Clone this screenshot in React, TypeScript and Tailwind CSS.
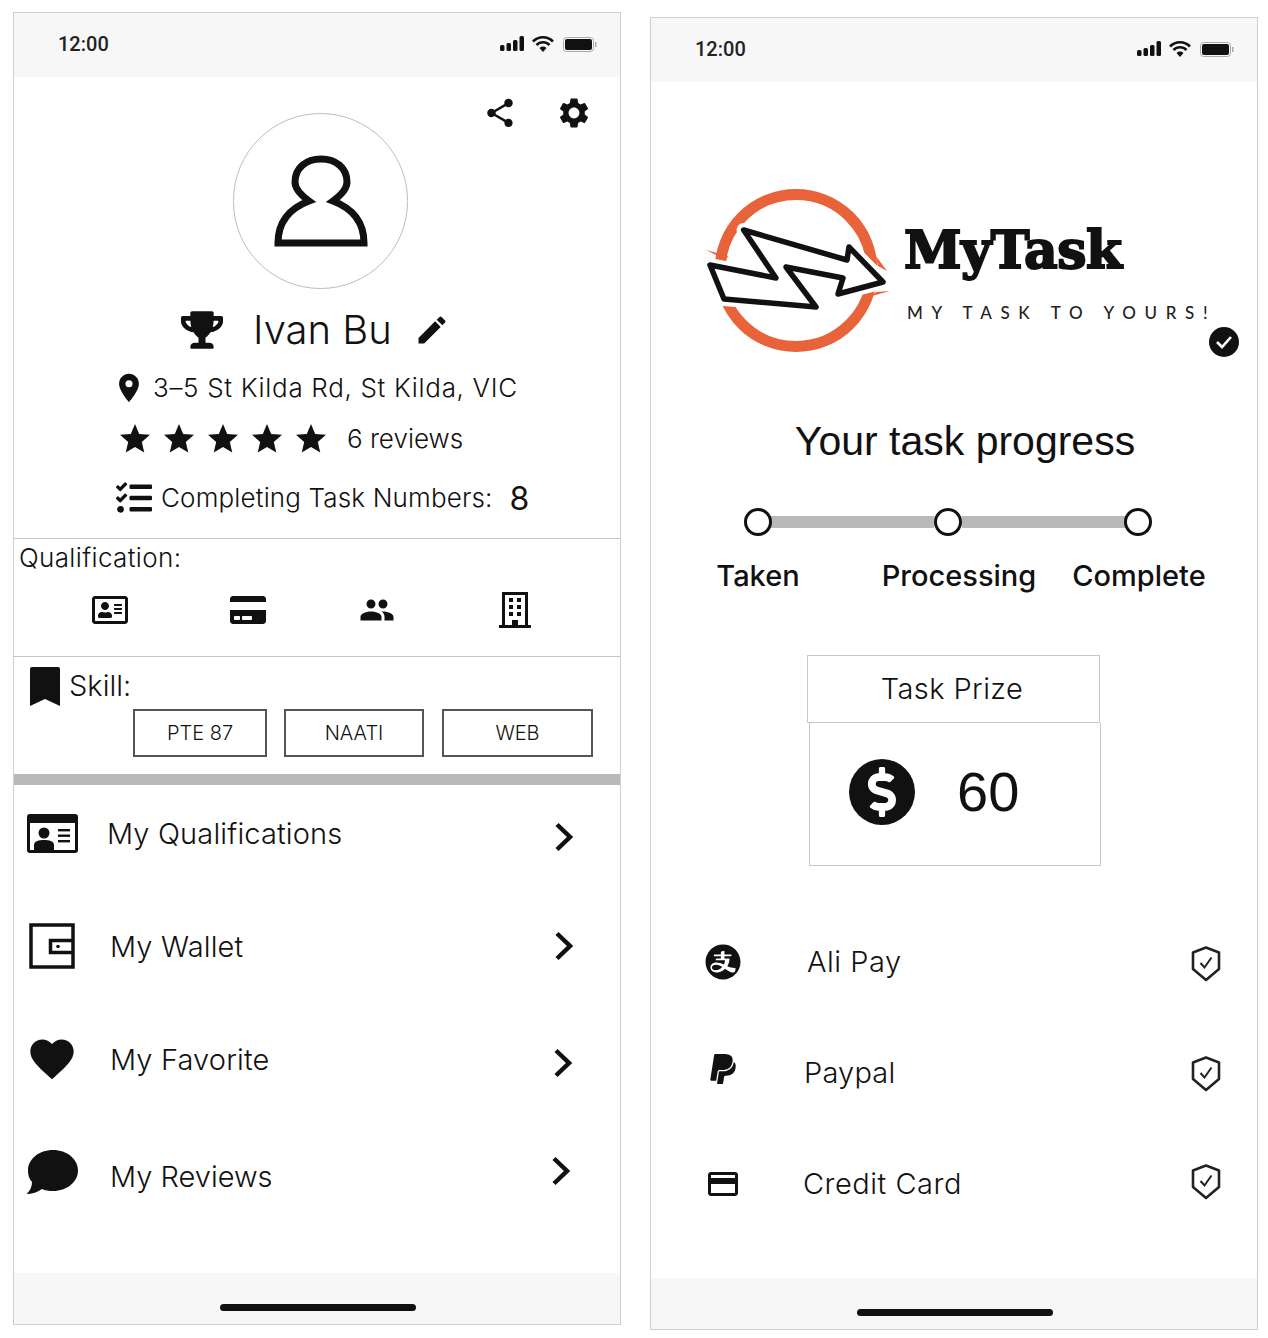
import { AiFillAlipayCircle } from "react-icons/ai";
import { FaCreditCard, FaDollarSign, FaPaypal, FaRegAddressCard, FaTasks, FaTrophy } from "react-icons/fa";
import { MdCreditCard, MdEdit, MdFavorite, MdLocationOn, MdPeople, MdSettings, MdShare, MdStar } from "react-icons/md";

const light = "font-['Inter',sans-serif] font-light text-[#111]";

function StatusBar() {
  return (
    <div className="flex h-[64px] shrink-0 items-center bg-[#f7f7f7] pl-[44px] pr-[22px] pb-[2px]">
      <span className="font-['Roboto',sans-serif] text-[20px] font-medium text-[#222]">12:00</span>
      <svg className="ml-auto" width="98" height="18" viewBox="0 0 98 18" fill="#111">
        <rect x="0" y="10" width="4.5" height="6" rx="1.5" />
        <rect x="6.5" y="8" width="4.5" height="8" rx="1.5" />
        <rect x="13" y="5" width="4.5" height="11" rx="1.5" />
        <rect x="19.5" y="1" width="4.5" height="15" rx="1.5" />
        <path d="M33 6.5a14 14 0 0 1 20 0M36.5 10a9 9 0 0 1 13 0" fill="none" stroke="#111" strokeWidth="2.6" />
        <path d="M39.5 13a5 5 0 0 1 7 0L43 17z" />
        <rect x="63.5" y="2.5" width="30" height="14" rx="3" fill="none" stroke="#aaa" strokeWidth="1" />
        <rect x="65" y="4" width="27" height="11" rx="2" />
        <rect x="95" y="7" width="1.5" height="5" fill="#aaa" />
      </svg>
    </div>
  );
}

function HomeBar() {
  return (
    <div className="mt-auto flex h-[51px] shrink-0 items-end justify-center bg-[#f7f7f7] pb-[13px]">
      <div className="ml-[2px] h-[7px] w-[196px] rounded-full bg-[#111]" />
    </div>
  );
}

function Person() {
  return (
    <svg width="94" height="92" viewBox="0 0 94 92" fill="none" stroke="#111" strokeWidth="7">
      <path d="M4 88C4 68 14 54 35 46C24 38 21 32 21 27C21 13 32 4 47 4C62 4 73 13 73 27C73 32 70 38 59 46C80 54 90 68 90 88Z" />
    </svg>
  );
}

function Building() {
  return (
    <svg width="32" height="36" viewBox="0 0 32 36" fill="#111">
      <path d="M3 0h26v33h3v3H0v-3h3zM6 3v30h7v-5h6v5h7V3z" />
      <rect x="10" y="6" width="4" height="4" /><rect x="18" y="6" width="4" height="4" />
      <rect x="10" y="13" width="4" height="4" /><rect x="18" y="13" width="4" height="4" />
      <rect x="10" y="20" width="4" height="4" /><rect x="18" y="20" width="4" height="4" />
    </svg>
  );
}

function BookmarkIcon() {
  return (
    <svg width="30" height="39" viewBox="0 0 30 39" fill="#111">
      <path d="M2 0H28a2 2 0 0 1 2 2V39L15 32L0 39V2a2 2 0 0 1 2-2Z" />
    </svg>
  );
}

function IdCard() {
  return (
    <svg width="51" height="39" viewBox="0 0 51 39">
      <rect width="51" height="39" rx="3" fill="#111" />
      <rect x="3" y="9" width="45" height="27" fill="#fff" />
      <circle cx="17" cy="19" r="5.5" fill="#111" />
      <path d="M7 36V31C7 27 12 26 17 26C22 26 27 27 27 31V36Z" fill="#111" />
      <rect x="31" y="15" width="12" height="2.4" fill="#111" />
      <rect x="31" y="20.5" width="12" height="2.4" fill="#111" />
      <rect x="31" y="26" width="12" height="2.4" fill="#111" />
    </svg>
  );
}

function Wallet() {
  return (
    <svg width="46" height="46" viewBox="0 0 46 46" fill="none" stroke="#111" strokeWidth="3.5">
      <rect x="2" y="2" width="42" height="42" />
      <path d="M44 17.5H21.5v12H44" />
      <circle cx="29" cy="23.5" r="1.8" fill="#111" stroke="none" />
    </svg>
  );
}

function Bubble() {
  return (
    <svg width="52" height="45" viewBox="0 0 52 45" fill="#111">
      <path d="M27 0C41 0 52 9 52 20.5C52 32 41 41 27 41C23 41 19 40.5 16 39C12 42 6 44 .5 44C4 41 6 37 6 32C3 29 2 25 2 20.5C2 9 13 0 27 0Z" />
    </svg>
  );
}

function Chevron() {
  return (
    <svg width="20" height="30" viewBox="0 0 20 30" fill="none" stroke="#111" strokeWidth="4.5">
      <path d="M3 2.5L16 15L3 27.5" />
    </svg>
  );
}

function Shield() {
  return (
    <svg width="30" height="36" viewBox="0 0 30 36" fill="none" stroke="#222" strokeWidth="2.6">
      <path d="M15 1.5L28 6.5V23L15 34L2 23V6.5Z" strokeLinejoin="round" />
      <path d="M9.5 17L13.5 21.5L20.5 11.5" strokeWidth="2" />
    </svg>
  );
}

function Logo() {
  return (
    <svg width="195" height="172" viewBox="700 185 195 172" className="shrink-0">
      <circle cx="796" cy="270.5" r="76" fill="none" stroke="#e8623a" strokeWidth="11" />
      <path d="M743.6 230L847 260L849 247L883 282L838 294L843 278L786 267L816 307L724 299L710 265L776 278Z" fill="#fff" stroke="#fff" strokeWidth="14" strokeLinejoin="round" />
      <path d="M706 250L728 256L726 260ZM876 256L887 271L878 266ZM872 296L890 291L876 292Z" fill="#e8623a" />
      <path d="M743.6 230L847 260L849 247L883 282L838 294L843 278L786 267L816 307L724 299L710 265L776 278Z" fill="#fff" stroke="#111" strokeWidth="5.5" strokeLinejoin="round" />
    </svg>
  );
}

function ProfilePhone() {
  return (
    <div className="flex h-[1313px] w-[608px] shrink-0 flex-col border border-[#cfcfcf] bg-white">
      <StatusBar />
      <div className="mt-[18px] flex h-[36px] shrink-0 items-center justify-end pr-[28px] text-[#111]">
        <MdShare size={34} />
        <MdSettings size={36} className="ml-[39px]" />
      </div>
      <div className="-mt-[18px] ml-[219px] flex h-[176px] w-[175px] shrink-0 items-center justify-center rounded-full border border-[#bdbdbd]">
        <Person />
      </div>
      <div className="mt-[16px] flex h-[50px] shrink-0 items-center pl-[167px] text-[#111]">
        <FaTrophy size={42} />
        <span className={`ml-[30px] text-[40px] leading-none ${light}`}>Ivan Bu</span>
        <MdEdit size={36} className="ml-[22px]" />
      </div>
      <div className="mt-[15px] flex h-[36px] shrink-0 items-center pl-[98px] text-[#111]">
        <MdLocationOn size={34} />
        <span className={`ml-[7px] text-[26px] leading-none tracking-[0.67px] ${light}`}>3–5 St Kilda Rd, St Kilda, VIC</span>
      </div>
      <div className="mt-[15px] flex h-[36px] shrink-0 items-center pl-[103px] text-[#111]">
        <div className="flex gap-[8px]">
          <MdStar size={36} /><MdStar size={36} /><MdStar size={36} /><MdStar size={36} /><MdStar size={36} />
        </div>
        <span className={`ml-[18px] text-[26px] leading-none ${light}`}>6 reviews</span>
      </div>
      <div className="mt-[23px] flex h-[36px] shrink-0 items-center pl-[102px] text-[#111]">
        <FaTasks size={36} />
        <span className={`ml-[9px] text-[26px] leading-none tracking-[0.15px] ${light}`}>Completing Task Numbers:</span>
        <span className="ml-[17px] mt-[2px] font-['Inter',sans-serif] text-[32px] leading-none text-[#111]">8</span>
      </div>
      <div className="mt-[22px] h-[119px] shrink-0 border-y border-[#c4c4c4]">
        <div className={`pl-[5px] pt-[4px] text-[26px] leading-[30px] tracking-[0.35px] ${light}`}>Qualification:</div>
        <div className="mt-[19px] flex h-[36px] items-center text-[#111]">
          <FaRegAddressCard size={36} className="ml-[78px]" />
          <FaCreditCard size={36} className="ml-[102px]" />
          <MdPeople size={36} className="ml-[93px]" />
          <div className="ml-[104px]"><Building /></div>
        </div>
      </div>
      <div className="h-[117px] shrink-0">
        <div className="flex items-start pl-[16px] pt-[10px] text-[#111]">
          <BookmarkIcon />
          <span className={`ml-[9px] mt-[4px] text-[29px] leading-none ${light}`}>Skill:</span>
        </div>
        <div className="mt-[3px] flex pl-[119px] text-[20px]">
          <div className={`flex h-[48px] w-[134px] items-center justify-center border-2 border-[#555] ${light}`}>PTE 87</div>
          <div className={`ml-[17px] flex h-[48px] w-[140px] items-center justify-center border-2 border-[#555] ${light}`}>NAATI</div>
          <div className={`ml-[18px] flex h-[48px] w-[151px] items-center justify-center border-2 border-[#555] ${light}`}>WEB</div>
        </div>
      </div>
      <div className="h-[11px] shrink-0 bg-[#b9b9b9]" />
      <div className="mt-[18px] flex shrink-0 flex-col">
        <div className="flex h-[60px] items-center">
          <div className="flex w-[76px] justify-center"><IdCard /></div>
          <span className={`ml-[17px] text-[29px] leading-none tracking-[0.15px] ${light}`}>My Qualifications</span>
          <div className="ml-auto mr-[46px] mt-[8px]"><Chevron /></div>
        </div>
        <div className="mt-[53px] flex h-[60px] items-center">
          <div className="flex w-[76px] justify-center"><Wallet /></div>
          <span className={`ml-[20px] text-[29px] leading-none tracking-[0.15px] ${light}`}>My Wallet</span>
          <div className="ml-auto mr-[46px]"><Chevron /></div>
        </div>
        <div className="mt-[53px] flex h-[60px] items-center">
          <div className="flex w-[76px] justify-center text-[#111]"><MdFavorite size={52} /></div>
          <span className={`ml-[20px] text-[29px] leading-none tracking-[0.15px] ${light}`}>My Favorite</span>
          <div className="ml-auto mr-[47px] mt-[8px]"><Chevron /></div>
        </div>
        <div className="mt-[57px] flex h-[60px] items-center">
          <div className="-mt-[8px] flex w-[76px] justify-center"><Bubble /></div>
          <span className={`ml-[20px] text-[29px] leading-none ${light}`}>My Reviews</span>
          <div className="ml-auto mr-[49px] -mt-[10px]"><Chevron /></div>
        </div>
      </div>
      <HomeBar />
    </div>
  );
}

function TaskPhone() {
  return (
    <div className="mt-[5px] flex h-[1313px] w-[608px] shrink-0 flex-col border border-[#cfcfcf] bg-white">
      <StatusBar />
      <div className="relative ml-[49px] mt-[103px] flex h-[172px] shrink-0">
        <Logo />
        <div className="ml-[9px] pt-[35px]">
          <div className="font-['DejaVu_Serif',serif] text-[52px] font-bold leading-[60px] tracking-[-0.5px] text-[#111] [-webkit-text-stroke:2px_#111]">MyTask</div>
          <div className="mt-[23px] whitespace-nowrap pl-[3px] font-['Lato',sans-serif] text-[17px] font-medium leading-[20px] tracking-[8.65px] text-[#222]">MY TASK TO YOURS!</div>
        </div>
        <div className="absolute left-[509px] top-[142px] flex h-[30px] w-[30px] items-center justify-center rounded-full bg-[#111]">
          <svg width="18" height="14" viewBox="0 0 18 14" fill="none" stroke="#fff" strokeWidth="2.6"><path d="M2 7L7 12L16 2" /></svg>
        </div>
      </div>
      <div className="mt-[59px] h-[50px] shrink-0 pl-[22px] text-center font-['Liberation_Sans',sans-serif] text-[41px] leading-[50px] text-[#111]">Your task progress</div>
      <div className="ml-[93px] mt-[42px] flex h-[28px] shrink-0 items-center">
        <div className="relative z-10 h-[28px] w-[28px] shrink-0 rounded-full border-[3px] border-[#111]" />
        <div className="-ml-[2px] h-[12px] w-[164px] bg-[#b9b9b9]" />
        <div className="h-[28px] w-[28px] shrink-0 rounded-full border-[3px] border-[#111]" />
        <div className="h-[12px] w-[163px] bg-[#b9b9b9]" />
        <div className="-ml-[1px] h-[28px] w-[28px] shrink-0 rounded-full border-[3px] border-[#111]" />
      </div>
      <div className="ml-[22px] mt-[22px] flex h-[36px] shrink-0 items-center font-['Inter',sans-serif] text-[29px] font-medium text-[#111]">
        <span className="w-[170px] text-center">Taken</span>
        <span className="ml-[31px] w-[170px] text-center">Processing</span>
        <span className="ml-[10px] w-[170px] text-center">Complete</span>
      </div>
      <div className={`ml-[156px] mt-[61px] flex h-[68px] w-[293px] shrink-0 items-center justify-center border border-[#c8c8c8] pr-[3px] text-[29px] tracking-[0.4px] ${light}`}>Task Prize</div>
      <div className="ml-[158px] flex h-[143px] w-[292px] shrink-0 items-center border border-t-0 border-[#c8c8c8] pb-[4px] pl-[39px]">
        <div className="flex h-[66px] w-[66px] items-center justify-center rounded-full bg-[#111]">
          <FaDollarSign size={50} className="text-white" />
        </div>
        <span className="ml-[42px] font-['Liberation_Sans',sans-serif] text-[56px] leading-none text-[#111]">60</span>
      </div>
      <div className="ml-[52px] mt-[66px] flex h-[60px] shrink-0 items-center">
        <div className="flex w-[40px] justify-center text-[#111]"><AiFillAlipayCircle size={42} /></div>
        <span className={`ml-[64px] -mt-[2px] text-[29px] leading-none tracking-[0.5px] ${light}`}>Ali Pay</span>
        <div className="ml-auto mr-[36px] mt-[4px]"><Shield /></div>
      </div>
      <div className="ml-[52px] mt-[51px] flex h-[60px] shrink-0 items-center">
        <div className="flex w-[40px] justify-center text-[#111]"><FaPaypal size={34} className="-mt-[8px]" /></div>
        <span className={`ml-[61px] -mt-[2px] text-[29px] leading-none tracking-[0.2px] ${light}`}>Paypal</span>
        <div className="ml-auto mr-[36px] mt-[2px]"><Shield /></div>
      </div>
      <div className="ml-[52px] mt-[51px] flex h-[60px] shrink-0 items-center">
        <div className="flex w-[40px] justify-center text-[#111]"><MdCreditCard size={36} /></div>
        <span className={`ml-[60px] -mt-[2px] text-[29px] leading-none tracking-[0.5px] ${light}`}>Credit Card</span>
        <div className="ml-auto mr-[36px] -mt-[4px]"><Shield /></div>
      </div>
      <HomeBar />
    </div>
  );
}

export default function App() {
  return (
    <div className="flex h-[1338px] w-[1268px] items-start gap-[29px] overflow-hidden bg-white pl-[13px] pt-[12px]">
      <ProfilePhone />
      <TaskPhone />
    </div>
  );
}
